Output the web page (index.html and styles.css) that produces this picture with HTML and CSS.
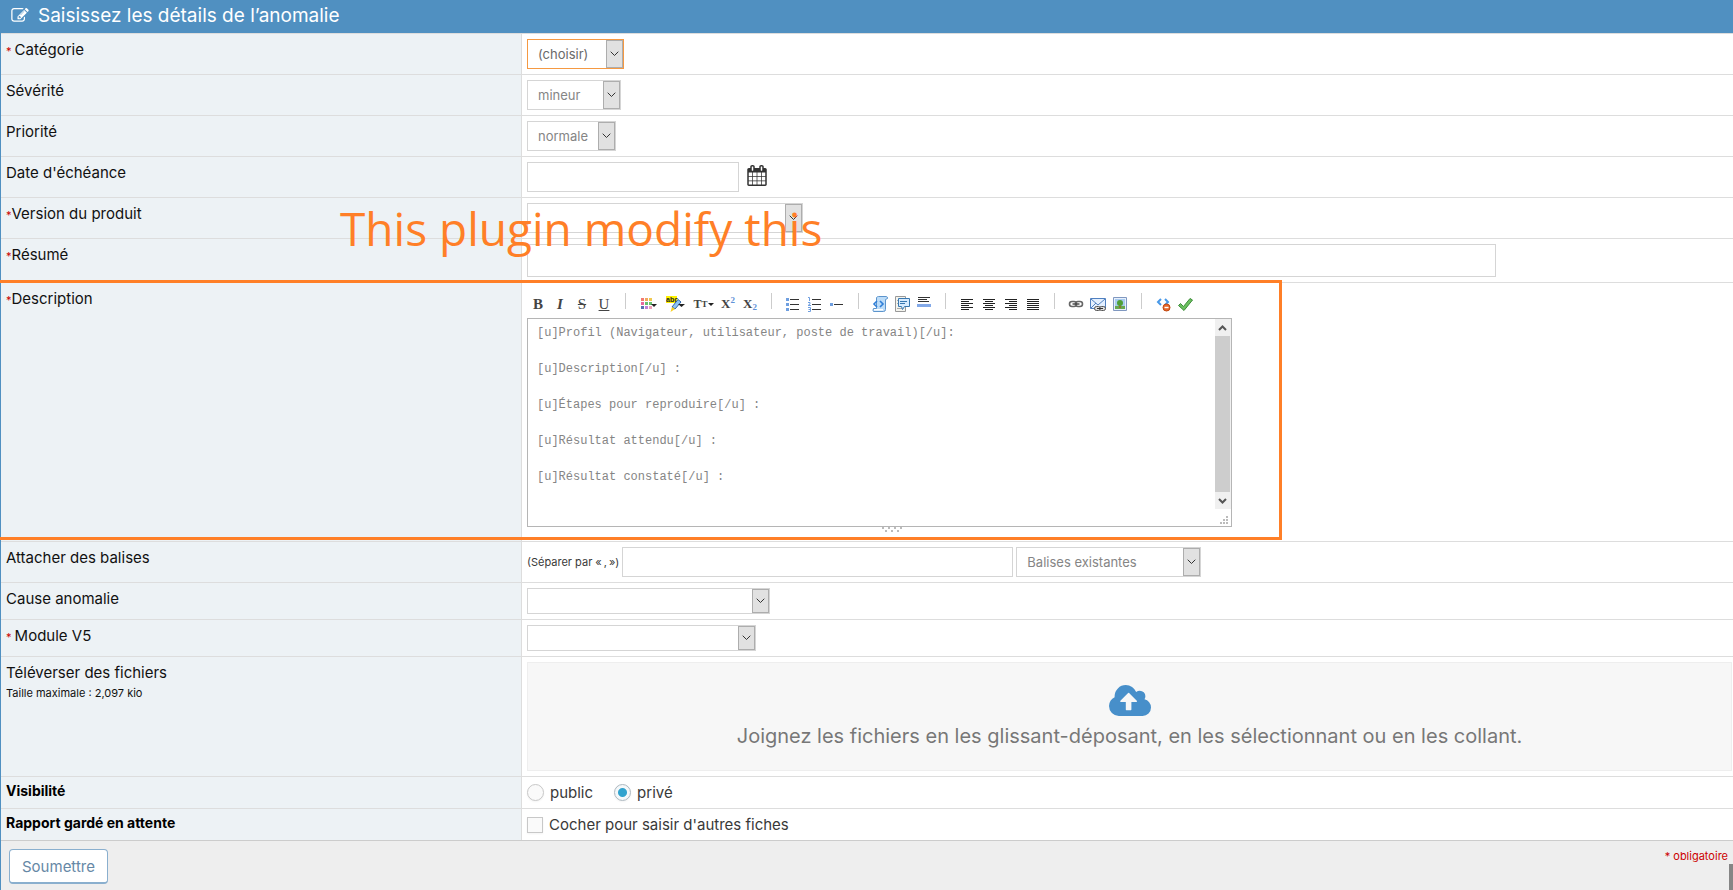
FILE: index.html
```html
<!DOCTYPE html>
<html lang="fr">
<head>
<meta charset="utf-8">
<title>Saisissez les détails de l’anomalie</title>
<link rel="stylesheet" href="styles.css">
</head>
<body>
<form class="report">
  <header class="report-header">
    <svg class="header-icon" viewBox="0 128 1792 1536" aria-hidden="true"><path d="M888 1184l116-116-152-152-116 116v56h96v96h56zm440-720q-16-16-33 1l-350 350q-17 17-1 33t33-1l350-350q17-17 1-33zm80 594v190q0 119-84.5 203.5t-203.5 84.5h-832q-119 0-203.5-84.5t-84.5-203.5v-832q0-119 84.5-203.5t203.5-84.5h832q63 0 117 25 15 7 18 23 3 17-9 29l-49 49q-14 14-32 8-23-6-45-6h-832q-66 0-113 47t-47 113v832q0 66 47 113t113 47h832q66 0 113-47t47-113v-126q0-13 9-22l64-64q15-15 35-7t20 29zm-96-738l288 288-672 672h-288v-288zm444 132l-92 92-288-288 92-92q28-28 68-28t68 28l152 152q28 28 28 68t-28 68z"/></svg>
    <h1 class="report-title">Saisissez les détails de l’anomalie</h1>
  </header>

  <div class="rows">
    <div class="row">
      <div class="label"><span class="req">* </span><label for="category">Catégorie</label></div>
      <div class="value">
        <span class="select focused w-category"><select id="category"><option>(choisir)</option></select><span class="arrow"><svg viewBox="0 0 9 6"><path d="M.7 .7 4.500 4.500 8.300 .7"/></svg></span></span>
      </div>
    </div>
    <div class="row">
      <div class="label"><label for="severity">Sévérité</label></div>
      <div class="value">
        <span class="select w-severity"><select id="severity"><option>mineur</option></select><span class="arrow"><svg viewBox="0 0 9 6"><path d="M.7 .7 4.500 4.500 8.300 .7"/></svg></span></span>
      </div>
    </div>
    <div class="row">
      <div class="label"><label for="priority">Priorité</label></div>
      <div class="value">
        <span class="select w-priority"><select id="priority"><option>normale</option></select><span class="arrow"><svg viewBox="0 0 9 6"><path d="M.7 .7 4.500 4.500 8.300 .7"/></svg></span></span>
      </div>
    </div>
    <div class="row">
      <div class="label"><label for="due">Date d'échéance</label></div>
      <div class="value date-value">
        <input class="field w-date" id="due" type="text">
        <svg class="calendar" viewBox="64 0 1664 1792" aria-hidden="true"><path d="M192 1664h288v-288h-288v288zm352 0h320v-288h-320v288zm-352-352h288v-320h-288v320zm352 0h320v-320h-320v320zm-352-384h288v-288h-288v288zm736 736h320v-288h-320v288zm-384-736h320v-288h-320v288zm768 736h288v-288h-288v288zm-384-352h320v-320h-320v320zm-352-864v-288q0-13-9.500-22.500t-22.500-9.500h-64q-13 0-22.500 9.500t-9.500 22.500v288q0 13 9.500 22.500t22.500 9.500h64q13 0 22.500-9.500t9.500-22.500zm736 864h288v-320h-288v320zm-384-384h320v-288h-320v288zm384 0h288v-288h-288v288zm32-480v-288q0-13-9.500-22.500t-22.500-9.500h-64q-13 0-22.500 9.500t-9.500 22.500v288q0 13 9.500 22.500t22.500 9.500h64q13 0 22.500-9.500t9.500-22.500zm384-64v1280q0 52-38 90t-90 38h-1408q-52 0-90-38t-38-90v-1280q0-52 38-90t90-38h128v-96q0-66 47-113t113-47h64q66 0 113 47t47 113v96h384v-96q0-66 47-113t113-47h64q66 0 113 47t47 113v96h128q52 0 90 38t38 90z"/></svg>
      </div>
    </div>
    <div class="row">
      <div class="label"><span class="req">*</span><label for="version">Version du produit</label></div>
      <div class="value">
        <span class="select w-version"><select id="version"><option></option></select><span class="arrow"><svg viewBox="0 0 9 6"><path d="M.7 .7 4.500 4.500 8.300 .7"/></svg></span></span>
      </div>
      <p class="note">This plugin modify this</p>
    </div>
    <div class="row">
      <div class="label"><span class="req">*</span><label for="summary">Résumé</label></div>
      <div class="value">
        <input class="field summary" id="summary" type="text">
      </div>
    </div>

    <div class="row">
      <div class="label"><span class="req">*</span><label for="description">Description</label></div>
      <div class="value">
        <div class="toolbar">
          <button class="tool glyph bold" type="button" title="Gras">B</button>
          <button class="tool glyph italic" type="button" title="Italique">I</button>
          <button class="tool glyph strike" type="button" title="Barré">S</button>
          <button class="tool glyph underline" type="button" title="Souligné">U</button>
          <span class="sep"></span>
          <button class="tool drop" type="button" title="Couleur"><svg viewBox="0 0 21 16"><path fill="#f47a70" d="M2 2h3v3H2z"/><path fill="#f0a860" d="M6 2h3v3H6z"/><path fill="#f0c850" d="M10 2h3v3h-3z"/><path fill="#e868a0" d="M2 6h3v3H2z"/><path fill="#68c070" d="M6 6h3v3H6zM10 6h3v3h-3z"/><path fill="#5870b0" d="M2 10h3v3H2z"/><path fill="#c080d8" d="M6 10h3v3H6z"/><path fill="#f0a0b8" d="M10 10h3v3h-3z"/><path fill="#222" d="M12 8h6l-3 3z"/></svg></button>
          <button class="tool drop" type="button" title="Surlignage"><svg viewBox="0 0 21 16"><path fill="#fff200" d="M0 0h11v7H0z"/><text class="mini" x="0" y="6">abc</text><path fill="#8fc4f4" stroke="#2e64a4" d="M6 11 12 3.500 15 6 9 13z"/><path fill="#f8d020" d="M6 11 9 13 4.500 16z"/><path fill="#222" d="M12 8h7l-3.500 3z"/></svg></button>
          <button class="tool drop glyph size" type="button" title="Taille">T<small>T</small><svg class="tiny" viewBox="0 0 6 3"><path fill="#222" d="M0 0h6L3 3z"/></svg></button>
          <button class="tool glyph script" type="button" title="Exposant">X<sup>2</sup></button>
          <button class="tool glyph script" type="button" title="Indice">X<sub>2</sub></button>
          <span class="sep"></span>
          <button class="tool" type="button" title="Liste"><svg viewBox="0 0 16 16"><path fill="#6f9fe0" d="M1 2h3v3H1zM1 7h3v3H1zM1 12h3v3H1z"/><path stroke="#333" d="M5 3.500h9M5 8.500h9M5 13.500h9"/></svg></button>
          <button class="tool" type="button" title="Liste numérotée"><svg viewBox="0 0 16 16"><path fill="none" stroke="#6f9fe0" d="M1 1.500h1.500V5M1 6.500h2v1.500L1 9.500h3M1 11.500h2.500v4H1M1.500 13.500h2"/><path stroke="#333" d="M5 3.500h9M5 8.500h9M5 13.500h9"/></svg></button>
          <button class="tool" type="button" title="Élément"><svg viewBox="0 0 16 16"><path fill="#6f9fe0" d="M1 7h3v3H1z"/><path stroke="#333" d="M5 8.500h9"/></svg></button>
          <span class="sep"></span>
          <button class="tool" type="button" title="Code"><svg viewBox="0 0 16 16"><path fill="#bcdcf8" stroke="#5c94cc" d="M4.500 1.500q1-1 2-1h8q1 0 1 2l-2 1v10q0 2-2 2h-10q-1-1 0-3h3z"/><path fill="none" stroke="#2f7fd8" stroke-width="1.600" d="M5 5 2 8l3 3M8 5l3 3-3 3"/><path fill="#fff" d="M2 13h9v1.500H2z"/></svg></button>
          <button class="tool" type="button" title="Citation"><svg viewBox="0 0 16 16"><path fill="#f4f4ee" stroke="#999" d="M1.500.5h10v15h-10z"/><path stroke="#aaa" d="M3 4.500h3M3 7.500h2M3 12.500h6"/><path fill="#d8ecff" stroke="#3878b0" d="M4.500 2.500h11v8h-5l-2 3-1-3h-3z"/><path stroke="#3878b0" d="M6 5.500h7M6 7.500h5"/></svg></button>
          <button class="tool" type="button" title="Ligne"><svg viewBox="0 0 16 16"><path stroke="#333" d="M2 1.500h12M2 3.500h9M2 5.500h11"/><path fill="#83a9e8" d="M1 8h14v3H1z"/></svg></button>
          <span class="sep"></span>
          <button class="tool" type="button" title="Aligner à gauche"><svg viewBox="0 0 16 16"><path stroke="#222" d="M2 3.500h12M2 5.500h8M2 7.500h12M2 9.500h8M2 11.500h12M2 13.500h8"/></svg></button>
          <button class="tool" type="button" title="Centrer"><svg viewBox="0 0 16 16"><path stroke="#222" d="M2 3.500h12M4 5.500h8M2 7.500h12M4 9.500h8M2 11.500h12M4 13.500h8"/></svg></button>
          <button class="tool" type="button" title="Aligner à droite"><svg viewBox="0 0 16 16"><path stroke="#222" d="M2 3.500h12M6 5.500h8M2 7.500h12M6 9.500h8M2 11.500h12M6 13.500h8"/></svg></button>
          <button class="tool" type="button" title="Justifier"><svg viewBox="0 0 16 16"><path stroke="#222" d="M2 3.500h12M2 5.500h12M2 7.500h12M2 9.500h12M2 11.500h12M2 13.500h12"/></svg></button>
          <span class="sep"></span>
          <button class="tool" type="button" title="Lien"><svg viewBox="0 0 16 16"><rect x="1.500" y="5.500" width="7" height="5" rx="2.500" fill="none" stroke="#666" stroke-width="1.600"/><rect x="7.500" y="5.500" width="7" height="5" rx="2.500" fill="none" stroke="#666" stroke-width="1.600"/><path stroke="#444" stroke-width="1.400" d="M4.500 8h7"/></svg></button>
          <button class="tool" type="button" title="Courriel"><svg viewBox="0 0 16 16"><path fill="#e4f0ff" stroke="#5080c0" d="M.5 2.500h15v10H.5z"/><path fill="none" stroke="#5080c0" d="M1 3l7 6 7-6M1 12l5-5"/><rect x="4.500" y="10.500" width="6" height="4" rx="2" fill="#ddd" stroke="#555"/><rect x="9.500" y="10.500" width="6" height="4" rx="2" fill="#ddd" stroke="#555"/><path stroke="#333" d="M7 12.500h6"/></svg></button>
          <button class="tool" type="button" title="Image"><svg viewBox="0 0 16 16"><path fill="#e8f0fc" stroke="#8098c0" d="M1.500 1.500h13v13h-13z"/><path fill="#a8ccf0" d="M3 3h10v7H3z"/><path fill="#68a850" d="M3 10h10v3H3z"/><path stroke="#a06028" stroke-width="1.500" d="M8 8v4"/><circle cx="8" cy="7" r="3" fill="#4fa038"/></svg></button>
          <span class="sep"></span>
          <button class="tool" type="button" title="Nettoyer"><svg viewBox="0 0 16 16"><path fill="none" stroke="#4898e8" stroke-width="2" d="M6 3 3 6l3 3M10 3l3 3-3 3"/><circle cx="11.500" cy="11.500" r="3.500" fill="#e8682c" stroke="#c04810"/><path stroke="#fff" stroke-width="1.400" d="M9.500 11.500h4"/></svg></button>
          <button class="tool" type="button" title="Aperçu"><svg viewBox="0 0 16 16"><path fill="#6cc060" stroke="#3d8c3a" stroke-linejoin="round" d="M1.500 9.500 3.500 7.500 6.500 10.500 13 2.500 15.500 4 7 14.500z"/></svg></button>
        </div>
        <div class="editor">
          <textarea class="editor-text" id="description" spellcheck="false">[u]Profil (Navigateur, utilisateur, poste de travail)[/u]:

[u]Description[/u] :

[u]Étapes pour reproduire[/u] :

[u]Résultat attendu[/u] :

[u]Résultat constaté[/u] :
</textarea>
          <div class="scroll" aria-hidden="true">
            <span class="scroll-end"><svg viewBox="0 0 9 6"><path d="M1 5 4.500 1.500 8 5"/></svg></span>
            <span class="scroll-thumb"></span>
            <span class="scroll-end"><svg viewBox="0 0 9 6"><path d="M1 1 4.500 4.500 8 1"/></svg></span>
            <svg class="grip" viewBox="0 0 8 8"><path d="M6 0h2v2H6zM3 3h2v2H3zM6 3h2v2H6zM0 6h2v2H0zM3 6h2v2H3zM6 6h2v2H6z"/></svg>
          </div>
        </div>
        <div class="resizer"><svg viewBox="0 0 20 5"><path d="M0 0h2v2H0zM6 0h2v2H6zM12 0h2v2h-2zM18 0h2v2h-2zM3 3h2v2H3zM9 3h2v2H9zM15 3h2v2h-2z"/></svg></div>
      </div>
      <div class="highlight"></div>
    </div>

    <div class="row">
      <div class="label"><label for="tags">Attacher des balises</label></div>
      <div class="value tags-value">
        <span class="hint">(Séparer par «&#8239;,&#8239;»)</span>
        <input class="field w-tags" id="tags" type="text">
        <span class="select w-existing"><select aria-label="Balises existantes"><option>Balises existantes</option></select><span class="arrow"><svg viewBox="0 0 9 6"><path d="M.7 .7 4.500 4.500 8.300 .7"/></svg></span></span>
      </div>
    </div>
    <div class="row">
      <div class="label"><label for="cause">Cause anomalie</label></div>
      <div class="value">
        <span class="select short w-cause"><select id="cause"><option></option></select><span class="arrow"><svg viewBox="0 0 9 6"><path d="M.7 .7 4.500 4.500 8.300 .7"/></svg></span></span>
      </div>
    </div>
    <div class="row">
      <div class="label"><span class="req">* </span><label for="module">Module V5</label></div>
      <div class="value">
        <span class="select short w-module"><select id="module"><option></option></select><span class="arrow"><svg viewBox="0 0 9 6"><path d="M.7 .7 4.500 4.500 8.300 .7"/></svg></span></span>
      </div>
    </div>
    <div class="row">
      <div class="label">Téléverser des fichiers<small class="max-size">Taille maximale : 2,097 kio</small></div>
      <div class="value drop-value">
        <div class="dropzone">
          <svg class="cloud" viewBox="0 128 1920 1408" aria-hidden="true"><path d="M1280 864q0-14-9-23l-352-352q-9-9-23-9t-23 9l-351 351q-10 12-10 24 0 14 9 23t23 9h224v352q0 13 9.500 22.500t22.500 9.500h192q13 0 22.500-9.500t9.500-22.500v-352h224q13 0 22.500-9.500t9.500-22.500zm640 288q0 159-112.500 271.500t-271.500 112.500h-1088q-185 0-316.500-131.500t-131.500-316.500q0-130 70-240t188-165q-2-30-2-43 0-212 150-362t362-150q156 0 285.500 87t188.500 231q71-62 166-62 106 0 181 75t75 181q0 76-41 138 130 31 213.500 135.500t83.500 238.500z"/></svg>
          <span>Joignez les fichiers en les glissant-déposant, en les sélectionnant ou en les collant.</span>
        </div>
      </div>
    </div>
    <div class="row">
      <div class="label strong">Visibilité</div>
      <div class="value choices">
        <label class="choice"><input class="radio" type="radio" name="view">public</label>
        <label class="choice"><input class="radio" type="radio" name="view" checked>privé</label>
      </div>
    </div>
    <div class="row last">
      <div class="label strong">Rapport gardé en attente</div>
      <div class="value choices">
        <label class="choice"><input class="check" type="checkbox">Cocher pour saisir d'autres fiches</label>
      </div>
    </div>
  </div>

  <footer class="report-footer">
    <button class="submit" type="submit">Soumettre</button>
    <span class="mandatory">* obligatoire</span>
  </footer>
</form>
<div class="page-corner"></div>
</body>
</html>
```
FILE: styles.css
```css
* {
  box-sizing: border-box;
}

body {
  margin: 0;
  background: #eee;
  color: #393939;
  font: 15px/20px Inter, "Open Sans", sans-serif;
}

input,
select,
button,
textarea {
  margin: 0;
  font-family: inherit;
}

.report {
  display: flex;
  flex-direction: column;
  min-height: 100vh;
  border-left: 1px solid #5090c1;
}

.report-header {
  display: flex;
  align-items: center;
  gap: 9px;
  height: 33px;
  padding: 0 10px 2px;
  background: #5090c1;
  color: #fff;
}

.header-icon {
  width: 18px;
  height: 15px;
  fill: #fff;
}

.report-title {
  margin: 0;
  font-size: 19px;
  font-weight: 400;
  line-height: 30px;
}

.rows {
  border-top: 1px solid #ddd;
  background: #fff;
}

.row {
  position: relative;
  display: grid;
  grid-template-columns: minmax(0, 521fr) minmax(0, 1211fr);
  border-bottom: 1px solid #ddd;
}

.row.last {
  border-bottom-color: #ccc;
}

.label {
  padding: 5px;
  border-right: 1px solid #ddd;
  background: #edf2f5;
  color: #111;
  line-height: 22px;
}

.label.strong {
  color: #000;
  font-size: 14px;
  font-weight: 700;
  line-height: 18px;
}

.req {
  color: #c00;
  font-size: 11px;
}

.max-size {
  display: block;
  font-size: 11px;
  line-height: 18px;
}

.value {
  padding: 5px;
}

/* Form controls */

.select {
  position: relative;
  display: block;
  height: 30px;
}

.select.short {
  height: 26px;
}

.select select {
  width: 100%;
  height: 100%;
  padding: 0 20px 0 10px;
  border: 1px solid #d5d5d5;
  border-radius: 0;
  background: #fff;
  color: #858585;
  font-size: 13px;
  appearance: none;
}

.select.focused select {
  border-color: #f59942;
  color: #696969;
}

.arrow {
  position: absolute;
  top: 1px;
  right: 1px;
  bottom: 1px;
  display: flex;
  align-items: center;
  justify-content: center;
  width: 17px;
  border: 1px solid #adadad;
  background: #e1e1e1;
  pointer-events: none;
}

.arrow svg {
  width: 9px;
  height: 6px;
  fill: none;
  stroke: #333;
}

.field {
  height: 30px;
  padding: 4px 10px;
  border: 1px solid #d5d5d5;
  background: #fff;
  color: #858585;
  font-size: 13px;
}

.summary {
  display: block;
  width: 100%;
  max-width: 969px;
  height: 33px;
}

.w-category { width: 97px; }
.w-severity { width: 94px; }
.w-priority { width: 89px; }
.w-date { width: 212px; }
.w-version { width: 276px; }
.w-tags { width: 391px; }
.w-existing { width: 185px; }
.w-cause { width: 243px; }
.w-module { width: 229px; }

.date-value {
  display: flex;
  align-items: flex-start;
  gap: 8px;
}

.calendar {
  width: 20px;
  height: 21px;
  margin-top: 3px;
  fill: #333;
}

.tags-value {
  display: flex;
  align-items: center;
  gap: 3px;
}

.hint {
  min-width: 92px;
  font-size: 11px;
}

/* Description editor */

.toolbar {
  display: flex;
  gap: 6px;
  padding: 8px 3px 6px;
}

.tool {
  display: flex;
  align-items: center;
  justify-content: center;
  width: 16px;
  height: 16px;
  padding: 0;
  border: 0;
  background: none;
  color: #444;
}

.tool.drop {
  width: 21px;
}

.tool svg {
  width: 100%;
  height: 16px;
  fill: none;
}

.mini {
  fill: #222;
  font: 700 7px "Liberation Sans", sans-serif;
}

.glyph {
  font-family: "Liberation Serif", serif;
  font-size: 15px;
  line-height: 16px;
}

.bold { font-weight: 700; }
.italic { font-style: italic; font-weight: 700; }
.strike { text-decoration: line-through; }
.underline { text-decoration: underline; }

.glyph.size {
  font-size: 12px;
  font-weight: 700;
}

.size small {
  font-size: 9px;
}

.tool .tiny {
  width: 6px;
  height: 3px;
}

.glyph.script {
  font-size: 13px;
  font-weight: 700;
}

.script sup,
.script sub {
  color: #5f93d8;
  font-size: 9px;
  line-height: 9px;
}

.script sup {
  align-self: flex-start;
}

.script sub {
  align-self: flex-end;
}

.sep {
  width: 1px;
  height: 16px;
  margin: -3px 7px 3px;
  background: #ccc;
}

.editor {
  display: flex;
  width: 100%;
  max-width: 705px;
  height: 209px;
  border: 1px solid #b5b5b5;
}

.editor-text {
  flex: 1;
  min-width: 0;
  padding: 5px 9px;
  border: 0;
  outline: 0;
  overflow: hidden;
  resize: none;
  background: #fff;
  color: #858585;
  font: 12px/18px "Liberation Mono", monospace;
}

.scroll {
  display: flex;
  flex-direction: column;
  align-items: flex-end;
  width: 16px;
}

.scroll-end {
  display: flex;
  align-items: center;
  justify-content: center;
  width: 16px;
  height: 17px;
  padding-right: 1px;
  background: #f0f0f0;
}

.scroll-end svg {
  width: 9px;
  height: 6px;
  fill: none;
  stroke: #555;
  stroke-width: 2;
}

.scroll-thumb {
  flex: 1;
  width: 16px;
  border-right: 1px solid #f0f0f0;
  background: #cdcdcd;
}

.grip {
  width: 8px;
  height: 8px;
  margin: 7px 3px 2px;
  fill: #bbb;
}

.resizer {
  display: flex;
  justify-content: center;
  width: 100%;
  max-width: 730px;
  height: 9px;
}

.resizer svg {
  width: 20px;
  height: 5px;
  fill: #bbb;
}

/* Annotations lying over the form */

.highlight {
  position: absolute;
  top: -3px;
  bottom: 1px;
  left: -1px;
  width: 1282px;
  border: 3px solid #ff7f27;
  border-left: 0;
  pointer-events: none;
}

.note {
  position: absolute;
  z-index: 1;
  top: 0;
  left: 339px;
  margin: 0;
  color: #ff7f27;
  font: 46px/60px "Open Sans", "Noto Sans", sans-serif;
  white-space: nowrap;
  pointer-events: none;
}

/* Upload, choices and footer */

.drop-value {
  padding-right: 1px;
}

.dropzone {
  display: flex;
  flex-direction: column;
  align-items: center;
  gap: 8px;
  min-height: 109px;
  padding: 22px 10px;
  border: 1px solid #eee;
  background: #f7f7f7;
  color: #777;
  font-size: 20px;
  line-height: 24px;
}

.cloud {
  width: 42px;
  height: 31px;
  fill: #478fca;
}

.choices {
  display: flex;
  align-items: center;
  gap: 21px;
}

.choice {
  display: flex;
  align-items: center;
  gap: 6px;
  line-height: 21px;
}

.radio,
.check {
  width: 17px;
  height: 17px;
  border: 1px solid #c8c8c8;
  background: #fafafa;
  box-shadow: 0 1px 2px rgba(0, 0, 0, .05);
  appearance: none;
}

.check {
  width: 16px;
  height: 16px;
}

.radio {
  border-radius: 50%;
}

.radio:checked {
  border-color: #adb8c0;
  background: radial-gradient(circle, #32a3ce 0 4px, #f4f8fa 5px);
}

.report-footer {
  display: flex;
  align-items: flex-start;
  justify-content: space-between;
  padding: 8px 5px 4px 8px;
}

.submit {
  height: 35px;
  padding: 0 12px;
  border: 1px solid #8aafce;
  border-bottom-width: 2px;
  border-radius: 4px;
  background: #fff;
  color: #6688a6;
  font-size: 15px;
}

.mandatory {
  color: #c00;
  font-size: 11px;
  line-height: 14px;
}

.page-corner {
  position: fixed;
  right: 0;
  bottom: 0;
  width: 4px;
  height: 26px;
  background: #858585;
}
```
